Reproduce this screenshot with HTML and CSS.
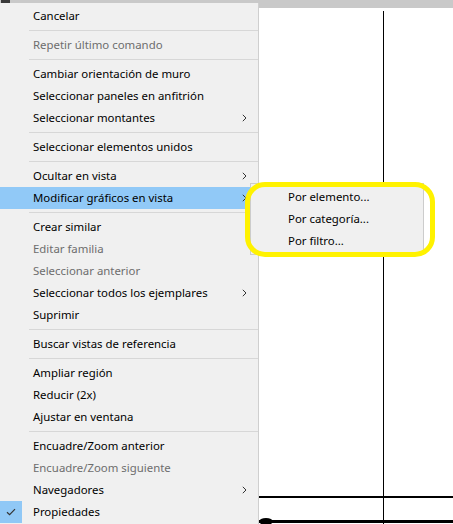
FILE: index.html
```html
<!DOCTYPE html>
<html lang="es">
<head>
<meta charset="utf-8">
<title>Menú contextual</title>
<link rel="stylesheet" href="styles.css">
</head>
<body>
<div class="app">
  <div class="toolbar-band"></div>
  <div class="canvas">
    <div class="grid-line v-line"></div>
    <div class="grid-line h-line h-line-1"></div>
    <div class="grid-line h-line h-line-2"></div>
    <div class="blob"></div>
  </div>

  <div class="cursor-mark"></div>

  <ul class="context-menu">
    <li class="item">Cancelar</li>
    <li class="sep"></li>
    <li class="item disabled">Repetir último comando</li>
    <li class="sep"></li>
    <li class="item">Cambiar orientación de muro</li>
    <li class="item">Seleccionar paneles en anfitrión</li>
    <li class="item has-sub">Seleccionar montantes<svg class="chev" viewBox="0 0 5 8"><path d="M0.8 0.8 L4 4 L0.8 7.2"/></svg></li>
    <li class="sep"></li>
    <li class="item">Seleccionar elementos unidos</li>
    <li class="sep"></li>
    <li class="item has-sub">Ocultar en vista<svg class="chev" viewBox="0 0 5 8"><path d="M0.8 0.8 L4 4 L0.8 7.2"/></svg></li>
    <li class="item has-sub active">Modificar gráficos en vista<svg class="chev" viewBox="0 0 5 8"><path d="M0.8 0.8 L4 4 L0.8 7.2"/></svg></li>
    <li class="sep"></li>
    <li class="item">Crear similar</li>
    <li class="item disabled">Editar familia</li>
    <li class="item disabled">Seleccionar anterior</li>
    <li class="item has-sub">Seleccionar todos los ejemplares<svg class="chev" viewBox="0 0 5 8"><path d="M0.8 0.8 L4 4 L0.8 7.2"/></svg></li>
    <li class="item">Suprimir</li>
    <li class="sep"></li>
    <li class="item">Buscar vistas de referencia</li>
    <li class="sep"></li>
    <li class="item">Ampliar región</li>
    <li class="item">Reducir (2x)</li>
    <li class="item">Ajustar en ventana</li>
    <li class="sep"></li>
    <li class="item">Encuadre/Zoom anterior</li>
    <li class="item disabled">Encuadre/Zoom siguiente</li>
    <li class="item has-sub">Navegadores<svg class="chev" viewBox="0 0 5 8"><path d="M0.8 0.8 L4 4 L0.8 7.2"/></svg></li>
    <li class="item checked"><span class="check-box"><svg viewBox="0 0 10 8"><path d="M1 4.2 L3.6 6.6 L9 1.2"/></svg></span>Propiedades</li>
  </ul>

  <ul class="submenu">
    <li class="sub-item">Por elemento...</li>
    <li class="sub-item">Por categoría...</li>
    <li class="sub-item">Por filtro...</li>
  </ul>

  <div class="annotation"></div>
</div>
</body>
</html>
```

FILE: styles.css
```css
* { box-sizing: border-box; }

html, body {
  margin: 0;
  padding: 0;
  background: #ffffff;
  overflow: hidden;
}

.app {
  position: relative;
  width: 453px;
  height: 524px;
  display: flex;
  flex-direction: column;
  font-family: "Segoe UI", "Noto Sans", "Open Sans", sans-serif;
  font-size: 11.4px;
  color: #000;
}

.toolbar-band {
  height: 8px;
  background: #c9c9c9;
  flex: none;
}

.canvas {
  position: relative;
  flex: 1;
  background: #ffffff;
}

.grid-line {
  position: absolute;
  background: #000;
}

.v-line {
  left: 383px;
  top: 3px;
  bottom: 0;
  width: 1px;
}

.h-line {
  left: 258px;
  right: 0;
}

.h-line-1 {
  top: 488px;
  height: 2px;
}

.h-line-2 {
  top: 512px;
  height: 3px;
}

.blob {
  position: absolute;
  left: 259px;
  top: 510px;
  width: 14px;
  height: 7px;
  border-radius: 50%;
  background: #000;
}

.cursor-mark {
  position: absolute;
  left: 1px;
  top: 0;
  width: 9px;
  height: 3px;
  background: #3a3a3a;
  z-index: 3;
}

.context-menu {
  position: absolute;
  left: 0;
  top: 3px;
  width: 259px;
  margin: 0;
  padding: 2px 0;
  list-style: none;
  background: #f0f0f0;
  border-right: 1px solid #cfcfcf;
  z-index: 2;
}

.item {
  position: relative;
  height: 22px;
  line-height: 22px;
  padding-left: 33px;
  white-space: nowrap;
  margin-right: 2px;
}

.item.disabled {
  color: #6d6d6d;
}

.item.active {
  background: #91c9f7;
}

.chev {
  position: absolute;
  left: 242px;
  top: 7px;
  width: 5px;
  height: 8px;
  fill: none;
  stroke: #333;
  stroke-width: 1;
}

.sep {
  height: 7px;
  display: flex;
  align-items: center;
  padding-left: 29px;
}

.sep::before {
  content: "";
  display: block;
  height: 1px;
  flex: 1;
  background: #d7d7d7;
}

.check-box {
  position: absolute;
  left: 0;
  top: 0;
  width: 22px;
  height: 22px;
  background: #90c8f6;
  display: flex;
  align-items: center;
  justify-content: center;
}

.check-box svg {
  width: 10px;
  height: 8px;
  fill: none;
  stroke: #333;
  stroke-width: 1.2;
}

.submenu {
  position: absolute;
  left: 250px;
  top: 183px;
  width: 174px;
  margin: 0;
  padding: 2px 0;
  list-style: none;
  background: #f0f0f0;
  border: 1px solid #cccccc;
  z-index: 4;
}

.sub-item {
  height: 22px;
  line-height: 22px;
  padding-left: 37px;
  white-space: nowrap;
}

.annotation {
  position: absolute;
  left: 245px;
  top: 182px;
  width: 190px;
  height: 75px;
  border: 5px solid #fff200;
  border-radius: 20px;
  z-index: 5;
}
```
